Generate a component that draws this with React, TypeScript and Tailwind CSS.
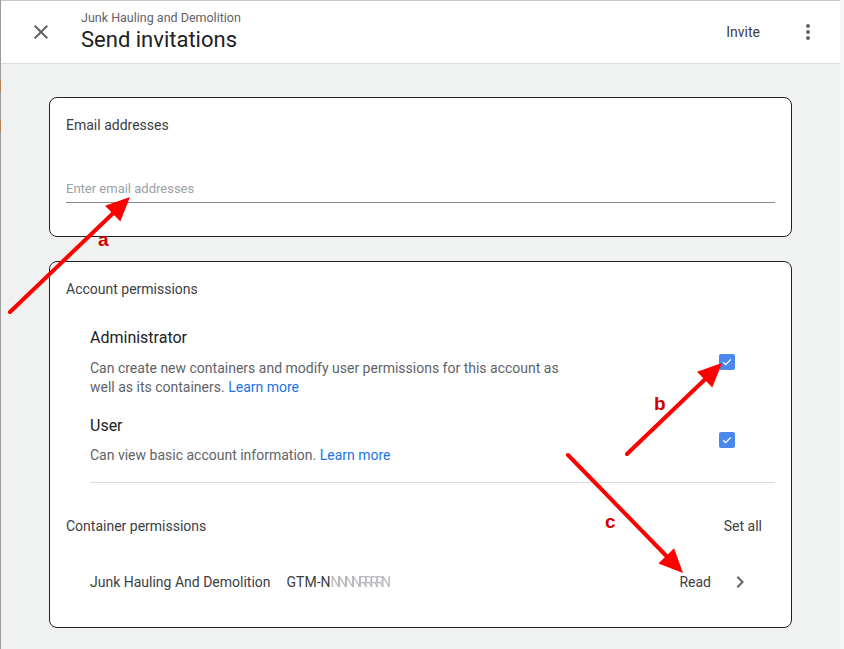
import React from "react";

type Pt = [number, number];

function Arrow({ from, to }: { from: Pt; to: Pt }) {
  const dx = to[0] - from[0];
  const dy = to[1] - from[1];
  const len = Math.hypot(dx, dy);
  const ux = dx / len;
  const uy = dy / len;
  const head = 24;
  const half = 11;
  const bx = to[0] - ux * head;
  const by = to[1] - uy * head;
  const pts = [
    `${to[0]},${to[1]}`,
    `${bx - uy * half},${by + ux * half}`,
    `${bx + uy * half},${by - ux * half}`,
  ].join(" ");
  return (
    <g>
      <line x1={from[0]} y1={from[1]} x2={bx + ux * 2} y2={by + uy * 2} stroke="#ff0000" strokeWidth={4} strokeLinecap="round" />
      <polygon points={pts} fill="#ff0000" />
    </g>
  );
}

function Checkbox() {
  return (
    <span className="flex h-4 w-4 items-center justify-center rounded-[2px] bg-[#4a88ee]">
      <svg width="12" height="12" viewBox="0 0 12 12">
        <path d="M2.2 6.3 4.7 8.6 9.8 3.4" fill="none" stroke="white" strokeWidth="1.3" />
      </svg>
    </span>
  );
}

function PermissionRow({
  title,
  gap,
  children,
}: {
  title: string;
  gap: string;
  children: React.ReactNode;
}) {
  return (
    <div className="flex items-center justify-between">
      <div>
        <p className="text-[16px] leading-6 text-[#202124]">{title}</p>
        <p className={`${gap} w-[476px] text-[14px] leading-[19px] text-[#5f6368]`}>{children}</p>
      </div>
      <div className="mr-[40px]">
        <Checkbox />
      </div>
    </div>
  );
}

export default function App() {
  return (
    <div className="relative flex h-[649px] w-[844px] overflow-hidden font-['Roboto','Liberation_Sans',sans-serif]">
      <div className="flex w-px shrink-0 flex-col bg-[#9c9c9c]">
        <div className="h-[80px]" />
        <div className="h-[12px] bg-[#b5834f]" />
        <div className="h-[28px]" />
        <div className="h-[12px] bg-[#b5834f]" />
      </div>

      <div className="flex w-[839px] shrink-0 flex-col border-t border-[#c3c7ce] bg-[#eff2f1]">
        <header className="flex h-[63px] shrink-0 items-center border-b border-[#dadce0] bg-white">
          <button className="ml-[28px] flex h-6 w-6 items-center justify-center text-[#5f6368]">
            <svg width="24" height="24" viewBox="0 0 24 24" fill="currentColor">
              <path d="M19 6.41 17.59 5 12 10.59 6.41 5 5 6.41 10.59 12 5 17.59 6.41 19 12 13.41 17.59 19 19 17.59 13.41 12z" />
            </svg>
          </button>
          <div className="ml-[28px] flex flex-col">
            <span className="text-[12.5px] leading-4 text-[#5f6368]">Junk Hauling and Demolition</span>
            <span className="text-[22px] leading-7 text-[#202124]">Send invitations</span>
          </div>
          <span className="ml-auto text-[14px] text-[#3c4043]">Invite</span>
          <div className="ml-[46px] mr-[30px] flex flex-col items-center gap-[2px]">
            <span className="h-1 w-1 rounded-full bg-[#5f6368]" />
            <span className="h-1 w-1 rounded-full bg-[#5f6368]" />
            <span className="h-1 w-1 rounded-full bg-[#5f6368]" />
          </div>
        </header>

        <main className="flex flex-col gap-6 px-12 pt-[33px]">
          <section className="rounded-lg border border-[#202124] bg-white px-4 pt-[17px] pb-[33px]">
            <p className="text-[14px] leading-5 text-[#3c4043]">Email addresses</p>
            <div className="mt-[44px] border-b border-[#8a8a8a] pb-[3px]">
              <input
                className="block h-5 w-full bg-transparent p-0 text-[13px] leading-5 text-[#202124] outline-none placeholder:text-[#9aa0a6]"
                placeholder="Enter email addresses"
              />
            </div>
          </section>

          <section className="rounded-lg border border-[#202124] bg-white px-4 pt-[17px] pb-[33px]">
            <p className="text-[14px] leading-5 text-[#3c4043]">Account permissions</p>
            <div className="ml-6 mt-[27px]">
              <PermissionRow title="Administrator" gap="mt-[9px]">
                Can create new containers and modify user permissions for this account as well as its containers.{" "}
                <span className="text-[#1a73e8]">Learn more</span>
              </PermissionRow>
              <div className="mt-[17px]">
                <PermissionRow title="User" gap="mt-[8px]">
                  Can view basic account information. <span className="text-[#1a73e8]">Learn more</span>
                </PermissionRow>
              </div>
              <div className="mt-[17px] border-t border-[#dadce0]" />
            </div>

            <div className="mt-[33px] flex items-center justify-between">
              <p className="text-[14px] leading-5 text-[#3c4043]">Container permissions</p>
              <span className="mr-[13px] text-[14px] leading-5 text-[#3c4043]">Set all</span>
            </div>

            <div className="ml-6 mt-[34px] flex items-center text-[14px] leading-5 text-[#3c4043]">
              <span>Junk Hauling And Demolition</span>
              <span className="ml-4">
                GTM-N
                <span className="tracking-[-3px] text-[#b8babd] blur-[0.4px]">NNNNRRRRN</span>
              </span>
              <span className="ml-auto">Read</span>
              <svg className="ml-[17px] mr-[23px] text-[#5f6368]" width="24" height="24" viewBox="0 0 24 24" fill="currentColor">
                <path d="M10 6 8.59 7.41 13.17 12l-4.58 4.59L10 18l6-6z" />
              </svg>
            </div>
          </section>
        </main>
      </div>

      <div className="flex-1 bg-[#f6f7f7]" />

      <svg className="pointer-events-none absolute inset-0" width="844" height="649" viewBox="0 0 844 649">
        <Arrow from={[10, 312]} to={[130, 197]} />
        <Arrow from={[627, 454]} to={[722, 363]} />
        <Arrow from={[568, 455]} to={[683, 573]} />
        <g fill="#d40000" fontFamily="Liberation Sans, Arial, sans-serif" fontWeight="bold" fontSize="19">
          <text x="98" y="246">a</text>
          <text x="654" y="410">b</text>
          <text x="605" y="528">c</text>
        </g>
      </svg>
    </div>
  );
}
